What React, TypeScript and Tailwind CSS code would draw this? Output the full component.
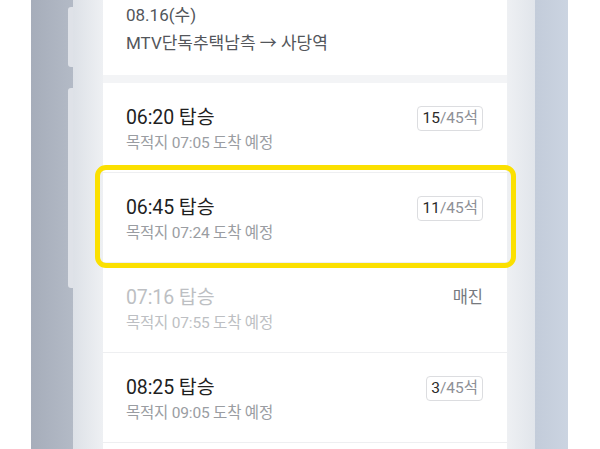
import React from "react";

const font = { fontFamily: "Roboto, 'Noto Sans CJK KR', 'Noto Sans', sans-serif" };

type Row = { time: string; arrive: string; seats?: number; soldOut?: boolean };

const rows: Row[] = [
  { time: "06:20", arrive: "07:05", seats: 15 },
  { time: "06:45", arrive: "07:24", seats: 11 },
  { time: "07:16", arrive: "07:55", soldOut: true },
  { time: "08:25", arrive: "09:05", seats: 3 },
];

function RowItem({ r }: { r: Row }) {
  return (
    <div className="h-[90px] shrink-0 border-b border-[#eeeff1] flex items-start justify-between pl-[23px] pr-[24px] pt-[23px]">
      <div className="flex flex-col">
        <div
          className={
            "text-[19.5px] leading-[24px] font-normal tracking-[-0.1px] " +
            (r.soldOut ? "text-[#bdbfc3]" : "text-[#1f1f1f]")
          }
        >
          {r.time} 탑승
        </div>
        <div
          className={
            "text-[15.5px] leading-[20px] mt-[3px] tracking-[-0.2px] " +
            (r.soldOut ? "text-[#bdbfc3]" : "text-[#9a9da2]")
          }
        >
          목적지 {r.arrive} 도착 예정
        </div>
      </div>
      {r.soldOut ? (
        <div className="text-[16.5px] leading-[24px] text-[#76797e] font-normal">매진</div>
      ) : (
        <div className="h-[25px] px-[4px] border border-[#dcdde0] rounded-[4px] flex items-center text-[15.5px] leading-none">
          <span className="text-[#2a2a2a]">{r.seats}</span>
          <span className="text-[#8d9096]">/45석</span>
        </div>
      )}
    </div>
  );
}

export default function App() {
  return (
    <div className="w-[600px] h-[449px] overflow-hidden bg-white flex" style={font}>
      <div className="w-[31px] shrink-0 bg-white" />
      {/* left frame */}
      <div className="w-[42px] shrink-0 bg-gradient-to-r from-[#a6adba] to-[#b3bac6] relative">
        <div className="absolute right-0 top-[7px] w-[5px] h-[60px] rounded-l-[3px] bg-[#dfe2e8]" />
        <div className="absolute right-0 top-[88px] w-[5px] h-[200px] rounded-l-[3px] bg-[#dfe2e8]" />
      </div>
      {/* left bezel */}
      <div className="w-[30px] shrink-0 bg-gradient-to-r from-[#dde1e7] to-[#eef0f3]" />
      {/* screen */}
      <div className="w-[404px] shrink-0 bg-white flex flex-col relative">
        <div className="h-[75px] shrink-0 pl-[23px] pt-[1px] text-[#53565b] text-[17px] leading-[28px]">
          <div>08.16(수)</div>
          <div>MTV단독추택남측 → 사당역</div>
        </div>
        <div className="h-[8px] shrink-0 bg-[#f3f4f6]" />
        {rows.map((r) => (
          <RowItem key={r.time} r={r} />
        ))}
        {/* highlight annotation */}
        <div className="absolute left-[-8px] top-[165px] w-[421px] h-[103px] border-[5px] border-[#fbe000] rounded-[11px]" />
      </div>
      {/* right bezel */}
      <div className="w-[28px] shrink-0 bg-gradient-to-r from-[#eef0f3] to-[#e1e5eb]" />
      {/* right frame */}
      <div className="w-[33px] shrink-0 bg-gradient-to-r from-[#c3ccda] to-[#cbd4e1]" />
      <div className="flex-1 bg-white" />
    </div>
  );
}
